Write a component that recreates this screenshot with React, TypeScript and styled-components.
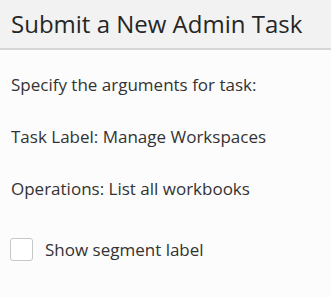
import React from 'react';
import styled, { createGlobalStyle } from 'styled-components';

const GlobalStyle = createGlobalStyle`
  html, body {
    margin: 0;
    padding: 0;
    background: #fcfcfc;
  }
  body {
    font-family: "Open Sans", "Noto Sans", sans-serif;
    color: #333333;
  }
`;

const Panel = styled.div`
  width: 331px;
  height: 297px;
  background: #fcfcfc;
  overflow: hidden;
`;

const Header = styled.div`
  height: 50px;
  background: #f2f2f2;
  border-bottom: 2px solid #d6d6d6;
  display: flex;
  align-items: center;
  padding: 0 11px 2px;
  box-sizing: border-box;
`;

const Title = styled.h1`
  margin: 0;
  font-size: 24px;
  font-weight: 400;
  color: #262626;
  white-space: nowrap;
`;

const Body = styled.div`
  padding: 20px 11px 0;
  display: flex;
  flex-direction: column;
`;

const Line = styled.p`
  margin: 0;
  height: 52px;
  font-size: 17px;
  line-height: 30px;
`;

const CheckRow = styled.label`
  display: flex;
  align-items: center;
  gap: 12px;
  margin: 12px 0 0 -1px;
  font-size: 17px;
`;

const Box = styled.span`
  width: 21px;
  height: 21px;
  border: 1px solid #c8c8c8;
  border-radius: 3px;
  background: #ffffff;
`;

export default function App() {
  return (
    <Panel>
      <GlobalStyle />
      <Header>
        <Title>Submit a New Admin Task</Title>
      </Header>
      <Body>
        <Line>Specify the arguments for task:</Line>
        <Line>Task Label: Manage Workspaces</Line>
        <Line>Operations: List all workbooks</Line>
        <CheckRow>
          <Box />
          Show segment label
        </CheckRow>
      </Body>
    </Panel>
  );
}
